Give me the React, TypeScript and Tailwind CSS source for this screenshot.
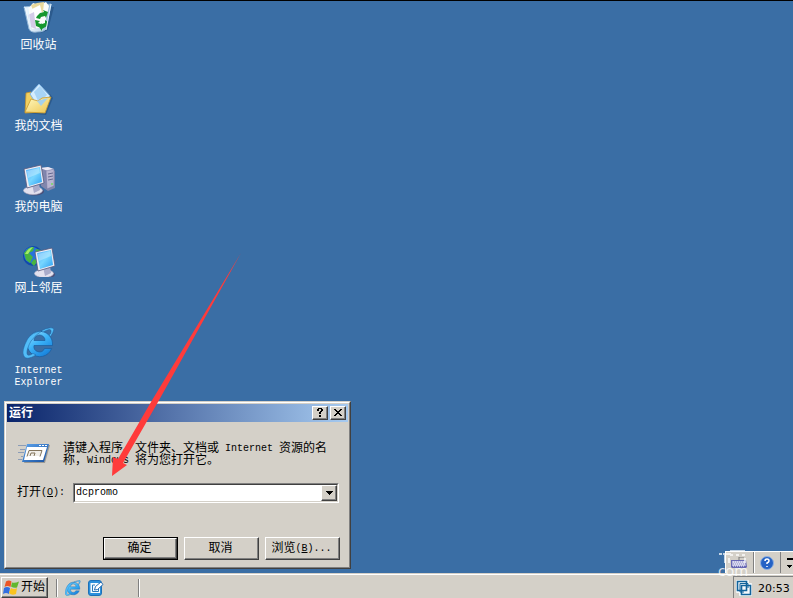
import React from 'react';

interface IconProps {
  className?: string;
}

const CJK = "font-['Liberation_Mono','Noto_Sans_CJK_SC',monospace]";

const RecycleBinIcon = ({ className }: IconProps) => (
  <svg className={className} viewBox="0 0 32 32">
    <defs>
      <linearGradient id="bin" x1="0" x2="1">
        <stop offset="0" stopColor="#f4fbff" />
        <stop offset="0.6" stopColor="#c8dcef" />
        <stop offset="1" stopColor="#8db4d8" />
      </linearGradient>
    </defs>
    <path d="M3 6 8 30Q17 33 25 28L31 5Z" fill="#173c69" opacity="0.4" />
    <path d="M1 5 6 27Q8 31 14 30 21 30 23 27L28 2Z" fill="url(#bin)" stroke="#91b6d7" />
    <path d="m5 7 5-6 6 2 7-3 3 4-5 21-12 2Z" fill="#fbfcfa" />
    <path d="m8 3 6-2 7-1-1 10-9 1Z" fill="#ead99c" />
    <path d="m9 7 8-4 2 8-9 10Z" fill="#fff" />
    <path d="m5 13 6-3 2 17-5-2Z" fill="#d4cce8" />
    <path
      d="m14 14 3-3 4-1-1-2 5 2-2 6-1-2-4 1-1 2-4-1Zm-2 4 5 1-2 2 3 1v4l-5-2Zm7 4 3-1 0-3 3 2-1 4-5 3v2l-3-4 3-4Z"
      fill="#15972e"
    />
    <path d="m1 5 4 2 3 21M28 2l-5 26" fill="none" stroke="#e3f4ff" />
  </svg>
);

const DocumentsIcon = ({ className }: IconProps) => (
  <svg className={className} viewBox="0 0 32 32">
    <defs>
      <linearGradient id="folder" x1="0" y1="0" x2="1" y2="1">
        <stop offset="0" stopColor="#fffbc4" />
        <stop offset="1" stopColor="#edc44e" />
      </linearGradient>
    </defs>
    <path d="m4 30 19 2 7-17-3-4Z" fill="#173c69" opacity="0.4" />
    <path d="m3 10 5-1 3 4 12 1-3 15-18 1Z" fill="#f1d060" stroke="#c7932a" strokeWidth="0.8" />
    <path d="M7 11 16 1l11 12-11 12Z" fill="#d5edff" stroke="#83b7e4" />
    <path d="m11 9 6-6 7 9-8 8Z" fill="#a8d4f6" />
    <path d="m2 29 6-13 7 2 4-3 9-1-6 16Z" fill="url(#folder)" stroke="#cc9a2c" strokeWidth="0.8" />
    <path d="m14 18 11-3-7 8Z" fill="#a5d1ec" />
  </svg>
);

const Monitor = () => (
  <g>
    <ellipse cx="11.5" cy="27.5" rx="9.5" ry="4" fill="#4a4e77" />
    <ellipse cx="10" cy="26.5" rx="9.5" ry="4" fill="#e3e1ee" stroke="#b8b8cd" strokeWidth="0.6" />
    <path d="m9 20 7-1 1 7-6 3Z" fill="#a9abca" />
    <path d="m1 5 17-4 3 18-17 5Z" fill="#eeecf3" stroke="#55587c" strokeWidth="0.8" />
    <path d="m3 6 14-3 2 15-13 4Z" fill="url(#screen)" />
    <path d="m4 7 12-3 1 5-12 5Z" fill="#fff" opacity="0.3" />
  </g>
);

const ComputerIcon = ({ className }: IconProps) => (
  <svg className={className} viewBox="0 0 32 32">
    <defs>
      <linearGradient id="screen" x1="0" y1="0" x2="1" y2="1">
        <stop offset="0" stopColor="#55b0fc" />
        <stop offset="0.5" stopColor="#77d6ff" />
        <stop offset="1" stopColor="#2a9df2" />
      </linearGradient>
    </defs>
    <path d="m18 4 8-1 6 4v17l-7 3-7-5Z" fill="#8186ad" />
    <path d="m17 4 8-1 6 2-6 2Z" fill="#ece9f5" />
    <path d="m23 7 8-2v17l-7 3Z" fill="#b8b5d1" stroke="#7375a0" strokeWidth="0.5" />
    <path d="m25 10 5-1m-5 4 5-1m-5 4 5-1" stroke="#65688f" />
    <circle cx="29" cy="20" r="1" fill="#76db5e" />
    <Monitor />
  </svg>
);

const NetworkIcon = ({ className }: IconProps) => (
  <svg className={className} viewBox="0 0 32 32">
    <circle cx="10" cy="11" r="10" fill="#1149ae" />
    <circle cx="9" cy="10" r="8" fill="#2872dc" />
    <path d="M1 8q5-7 10-6l-1 4-4 2 4 4-3 6-4-3Zm12-4 5 1 1 5-4 2-3-4Zm-2 10 4 2-4 5-3-3Z" fill="#47b442" />
    <path d="M2 9q3-6 8-7L7 6 5 9Z" fill="#a2ed65" />
    <g transform="translate(11 2)">
      <Monitor />
    </g>
  </svg>
);

const ExplorerIcon = ({ className }: IconProps) => (
  <svg className={className} viewBox="0 0 32 32">
    <defs>
      <linearGradient id="ie" x1="0" y1="0" x2="0.7" y2="1">
        <stop offset="0" stopColor="#9fe2ff" />
        <stop offset="0.5" stopColor="#3db4f8" />
        <stop offset="1" stopColor="#1680db" />
      </linearGradient>
    </defs>
    <path
      d="M29.500 18.500V16A12.700 12.700 0 1 0 28.700 21.500H21.500A5.500 5.500 0 0 1 11 18.500ZM11 13.500A5.500 5.500 0 0 1 22 13.500Z"
      fill="url(#ie)"
      fillRule="evenodd"
      stroke="#1b5c9c"
      strokeWidth="0.7"
    />
    <path
      d="M27.500 9.500Q34 0 27.500 0.800 23 1 18 4L20 5Q29 0 28 5 28 7 26 8ZM4.500 12Q-2 24 0.800 29 3 34 13 28L10 26.500Q4.500 30 4 26.500 3.500 22 8 14Q13 7 19 4 9 5 4.500 12Z"
      fill="#52bdf8"
      stroke="#1b5c9c"
      strokeWidth="0.5"
    />
  </svg>
);

const RunIcon = () => (
  <svg className="h-8 w-8" viewBox="0 0 32 32">
    <defs>
      <linearGradient id="runFrame" x1="0" x2="1" y2="1">
        <stop offset="0" stopColor="#5ea5ee" />
        <stop offset="1" stopColor="#174f9f" />
      </linearGradient>
    </defs>
    <path d="m11 8 21-1-5 18H6Z" fill="#77756f" opacity="0.6" />
    <path d="M9 6h22l-5 18H4Z" fill="url(#runFrame)" />
    <path d="M9 9h20l-4 13H6Z" fill="#fff" />
    <path d="M11 12h13l-2 6H9Z" fill="#f1eee8" />
    <path d="m11 12.500-2 6m2-6h13l-2 6M12 18l1-3h4l-1 3" fill="none" stroke="#82745c" />
    <path d="M21 7.500h2m1 0h2m1 0h2" stroke="#fff" />
    <path d="M0 7.500h8M2 11.500h5M0 14.500h6M3 18.500h2M0 21.500h4" stroke="#8b9cb6" />
  </svg>
);

const StartFlag = () => (
  <svg className="h-4 w-4" viewBox="0 0 16 16">
    <path d="M3 1.500q3-2 5.500 0L7.500 7Q4.500 5 1.500 7Z" fill="#ed5524" />
    <path d="M9 2.500q3 1 7-1l-2 6q-3 1-6-1Z" fill="#61b72e" />
    <path d="M1 8q3-2 6 0l-1 6q-3-2-6 0Z" fill="#326fe0" />
    <path d="M8 8q3 2 6 0l-1 6q-4 2-7-1Z" fill="#fac320" />
  </svg>
);

const DesktopQuickIcon = () => (
  <svg className="h-4 w-4" viewBox="0 0 16 16">
    <rect x="0.500" y="0.500" width="13" height="15" rx="2.500" fill="#2b90dc" stroke="#1c70b8" />
    <path d="M2.500 3h8l1.500 2v8h-9.500Z" fill="#f5fbff" />
    <path d="M7 5H4.500v6.500h6V9" fill="none" stroke="#2a79b9" />
    <path d="m6.500 10 1-3.500 5.500-4.500 2 2.500-5.500 5Z" fill="#fff" stroke="#286fb4" />
  </svg>
);

const desktopIcons = [
  { label: '回收站', Icon: RecycleBinIcon, pos: 'top-[2px]' },
  { label: '我的文档', Icon: DocumentsIcon, pos: 'top-[83px]' },
  { label: '我的电脑', Icon: ComputerIcon, pos: 'top-[164px]' },
  { label: '网上邻居', Icon: NetworkIcon, pos: 'top-[245px]' },
  { label: 'Internet Explorer', Icon: ExplorerIcon, pos: 'top-[327px]' },
];

const raised =
  'border border-t-white border-l-white border-r-[#404040] border-b-[#404040] bg-[#d4d0c8] shadow-[inset_-1px_-1px_#808080]';

const Latin = ({ children }: { children: React.ReactNode }) => (
  <span className="font-['Liberation_Mono',monospace] text-[10px] leading-3">{children}</span>
);

function RunDialog() {
  return (
    <section className="absolute top-[401px] left-[4px] h-[168px] w-[347px] border border-t-[#d4d0c8] border-l-[#d4d0c8] border-r-[#404040] border-b-[#404040] bg-[#d4d0c8] text-xs leading-3 text-black">
      <div className="h-full border border-t-white border-l-white border-r-[#808080] border-b-[#808080] px-px pt-px">
        <header className="flex h-[18px] items-center bg-linear-to-r/srgb from-[#0a246a] to-[#a6caf0] pr-0.5 pl-0.5">
          <h1 className="flex-1 pt-0.5 font-bold text-white">运行</h1>
          <button className={`flex h-[14px] w-4 items-center justify-center ${raised}`}>
            <svg className="h-[10px] w-[10px]" viewBox="0 0 10 10" shapeRendering="crispEdges">
              <path d="M2 3V1h1V0h4v1h1v2H7v1H6v2H4V4h1V3h1V1H4v2ZM4 7h2v2H4Z" />
            </svg>
          </button>
          <button className={`ml-0.5 flex h-[14px] w-4 items-center justify-center ${raised}`}>
            <svg className="mb-px h-[7px] w-2" viewBox="0 0 8 7" shapeRendering="crispEdges">
              <path d="M0 0h2v1h1v1h2V1h1V0h2v1H7v1H6v1H5v1h1v1h1v1h1v1H6V6H5V5H3v1H2v1H0V6h1V5h1V4h1V3H2V2H1V1H0Z" />
            </svg>
          </button>
        </header>
        <div className="flex pt-4 pl-[11px]">
          <RunIcon />
          <div className="mt-[5px] ml-[13px] whitespace-pre">
            <p className="flex h-3 items-center">
              请键入程序、文件夹、文档或<Latin> Internet </Latin>资源的名
            </p>
            <p className="flex h-3 items-center">
              称，<Latin>Windows </Latin>将为您打开它。
            </p>
          </div>
        </div>
        <div className="mt-[13px] flex h-5 items-center pl-[10px]">
          <label className="flex w-14 items-center whitespace-pre">
            打开<Latin>(<u>O</u>):</Latin>
          </label>
          <div className="flex h-5 w-[266px] border border-t-[#808080] border-l-[#808080] border-r-white border-b-white bg-white">
            <div className="flex flex-1 items-center border border-t-[#404040] border-l-[#404040] border-r-0 border-b-[#d4d0c8] pl-px">
              <Latin>dcpromo</Latin>
            </div>
            <div className="border border-t-[#404040] border-r-[#d4d0c8] border-b-[#d4d0c8] border-l-0">
              <button className={`flex h-4 w-4 items-center justify-center ${raised}`}>
                <svg className="h-1 w-[7px]" viewBox="0 0 7 4" shapeRendering="crispEdges">
                  <path d="M0 0h7v1H6v1H5v1H4v1H3V3H2V2H1V1H0Z" />
                </svg>
              </button>
            </div>
          </div>
        </div>
        <div className="mt-[34px] flex gap-1.5 pl-24">
          <button className="h-[23px] w-[75px] border border-black">
            <span className={`flex h-full items-center justify-center pr-0.5 ${raised}`}>确定</span>
          </button>
          <button className={`flex h-[23px] w-[75px] items-center justify-center pr-0.5 ${raised}`}>取消</button>
          <button className={`flex h-[23px] w-[75px] items-center justify-center pr-0.5 ${raised}`}>
            浏览<Latin>(<u>B</u>)...</Latin>
          </button>
        </div>
      </div>
    </section>
  );
}

function LanguageBar() {
  return (
    <div className="absolute top-[551px] left-[725px] flex h-[22px] w-[68px] items-center border-t border-l border-white bg-[#d4d0c8]">
      <div className="flex h-full w-[28px] items-center justify-center border-r border-[#808080]">
        <svg className="h-3 w-4" viewBox="0 0 16 12">
          <path d="M8 3V0h5" fill="none" stroke="#777" />
          <path d="M0 3h15l1 7-1 1H1L0 10Z" fill="#6968b4" />
          <path d="M1 4h13l1 5H1Z" fill="#b6b5dd" />
          <path d="M2 5h12M3 7h12M2 9h12" stroke="#fff" strokeDasharray="1 1" />
        </svg>
      </div>
      <div className="flex h-full w-[28px] items-center justify-center border-r border-l border-l-white border-r-[#808080]">
        <svg className="h-[14px] w-[14px]" viewBox="0 0 14 14">
          <circle cx="7" cy="7" r="6.500" fill="#2462c5" stroke="#91b2df" />
          <path d="M5 5q0-2 2-2t2 2q0 1-2 2v1M7 10v1" fill="none" stroke="#fff" strokeWidth="1.500" />
        </svg>
      </div>
      <svg className="ml-[5px] h-4 w-[7px]" viewBox="0 0 7 16" shapeRendering="crispEdges">
        <path d="M1 3h6v2H1ZM0 10h7l-3 3Z" />
      </svg>
    </div>
  );
}

function Taskbar() {
  return (
    <footer className="absolute inset-x-0 bottom-0 h-[25px] border-t border-[#d4d0c8] bg-[#d4d0c8] text-xs leading-3 text-black">
      <div className="flex h-6 border-t border-white pt-[2px] pl-px">
        <button className={`flex h-[21px] w-[47px] items-center gap-0.5 pl-px whitespace-nowrap ${raised}`}>
          <StartFlag />
          <span className="pt-px">开始</span>
        </button>
        <i className="mt-0.5 ml-2 h-[18px] w-[2px] border-r border-l border-l-[#808080] border-r-white" />
        <div className="flex w-20 items-center gap-[7px] pl-[7px]">
          <ExplorerIcon className="h-4 w-4" />
          <DesktopQuickIcon />
        </div>
        <i className="mt-0.5 h-[18px] w-[2px] border-r border-l border-l-[#808080] border-r-white" />
        <div className="-mt-px ml-auto flex h-[22px] w-[60px] items-center gap-1.5 border-t border-l border-[#808080] pt-px pl-0.5">
          <svg className="h-4 w-4 shrink-0" viewBox="0 0 16 16">
            <path d="M1 1h11v3h3v11H4v-3H1Z" fill="#f4f8fb" stroke="#f4f8fb" strokeWidth="2" strokeLinejoin="round" />
            <path d="M1.500 1.500h9v9h-9ZM5.500 5.500h9v9h-9Z" fill="none" stroke="#12639b" strokeWidth="1.600" />
            <path d="M4 8V3.500h8V8M4 8v4h4" fill="none" stroke="#12639b" />
          </svg>
          <span className="pt-0.5 font-['DejaVu_Sans'] text-[11px]">20:53</span>
        </div>
      </div>
    </footer>
  );
}

// Faint mark that sits across the left end of the language bar
function CornerMark() {
  return (
    <div className="absolute top-[549px] left-[718px] flex w-8 flex-col">
      <svg className="h-[14px] w-[30px]" viewBox="0 0 30 14">
        <path d="M1 5h3M7 5v9M5 5h8M12 2h15M12 6h3m3 0h3m3 0h3M11 9v5M27 9v5" fill="none" stroke="#fff" strokeWidth="2" opacity="0.7" />
      </svg>
      <span className="font-['Open_Sans'] text-[15px] leading-[14px] text-white/80">com</span>
    </div>
  );
}

export default function App() {
  return (
    <main className={`relative h-[598px] w-[793px] overflow-hidden border-t border-black bg-[#3a6ea5] text-xs text-white ${CJK}`}>
      <div className="absolute inset-x-0 -top-px h-[598px]">
        {desktopIcons.map(({ label, Icon, pos }) => (
          <div key={label} className={`absolute left-0 flex w-[77px] flex-col items-center ${pos}`}>
            <Icon className="h-8 w-8" />
            {label.startsWith('I') ? (
              <span className="mt-1.5 w-[60px] text-center font-['Liberation_Mono',monospace] text-[10px] leading-3">
                {label}
              </span>
            ) : (
              <span className="mt-1.5 leading-3">{label}</span>
            )}
          </div>
        ))}
        <RunDialog />
        <LanguageBar />
        <Taskbar />
        <CornerMark />
        <svg className="pointer-events-none absolute top-[250px] left-[105px] h-[230px] w-[140px]" viewBox="105 250 140 230">
          <path d="M241 253 158 402 123 463 127 465 112 476 113 457 118 459 151 402Z" fill="#ff3b3b" />
        </svg>
      </div>
    </main>
  );
}
